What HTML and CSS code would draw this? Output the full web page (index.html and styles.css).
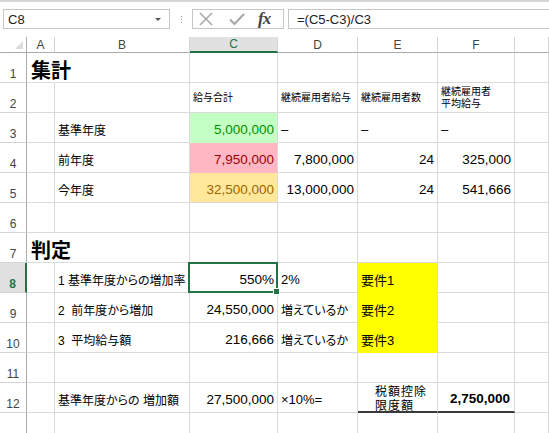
FILE: index.html
```html
<!DOCTYPE html>
<html lang="ja">
<head>
<meta charset="utf-8">
<link rel="stylesheet" href="styles.css">
</head>
<body>
<div class="fbar">
  <div class="namebox"><span>C8</span><span class="dd"></span></div>
  <div class="dots"><i></i><i></i><i></i></div>
  <div class="btns">
    <svg width="16" height="16" viewBox="0 0 16 16"><path d="M2 2L14 14M14 2L2 14" stroke="#a9a9a9" stroke-width="1.6" fill="none"/></svg>
    <svg width="18" height="16" viewBox="0 0 18 16"><path d="M2 8.5L6.5 13L16 3" stroke="#a9a9a9" stroke-width="2.2" fill="none"/></svg>
    <span class="fx">fx</span>
  </div>
  <div class="formula">=(C5-C3)/C3</div>
</div>
<div class="sheet">
  <div class="c corner"><span class="tri"></span></div>
  <div class="c ch">A</div><div class="c ch">B</div><div class="c ch sel">C</div><div class="c ch">D</div><div class="c ch">E</div><div class="c ch">F</div><div class="c ch"></div>

  <div class="c rh">1</div><div class="c title nob">集計</div><div class="c"></div><div class="c"></div><div class="c"></div><div class="c"></div><div class="c"></div><div class="c"></div>

  <div class="c rh">2</div><div class="c"></div><div class="c"></div><div class="c sm">給与合計</div><div class="c sm">継続雇用者給与</div><div class="c sm">継続雇用者数</div><div class="c sm">継続雇用者<br>平均給与</div><div class="c"></div>

  <div class="c rh">3</div><div class="c"></div><div class="c jp">基準年度</div><div class="c num good">5,000,000</div><div class="c">–</div><div class="c">–</div><div class="c">–</div><div class="c"></div>

  <div class="c rh">4</div><div class="c"></div><div class="c jp">前年度</div><div class="c num bad">7,950,000</div><div class="c num">7,800,000</div><div class="c num">24</div><div class="c num">325,000</div><div class="c"></div>

  <div class="c rh">5</div><div class="c"></div><div class="c jp">今年度</div><div class="c num neutral">32,500,000</div><div class="c num">13,000,000</div><div class="c num">24</div><div class="c num">541,666</div><div class="c"></div>

  <div class="c rh">6</div><div class="c"></div><div class="c"></div><div class="c"></div><div class="c"></div><div class="c"></div><div class="c"></div><div class="c"></div>

  <div class="c rh">7</div><div class="c title nob">判定</div><div class="c"></div><div class="c"></div><div class="c"></div><div class="c"></div><div class="c"></div><div class="c"></div>

  <div class="c rh rsel">8</div><div class="c"></div><div class="c jp">1&nbsp;基準年度からの増加率</div><div class="c num active">550%<span class="handle"></span></div><div class="c">2%</div><div class="c jp yel">要件1</div><div class="c"></div><div class="c"></div>

  <div class="c rh">9</div><div class="c"></div><div class="c jp">2&nbsp;&nbsp;前年度から増加</div><div class="c num">24,550,000</div><div class="c jp">増えているか</div><div class="c jp yel">要件2</div><div class="c"></div><div class="c"></div>

  <div class="c rh">10</div><div class="c"></div><div class="c jp">3&nbsp;&nbsp;平均給与額</div><div class="c num">216,666</div><div class="c jp">増えているか</div><div class="c jp yel">要件3</div><div class="c"></div><div class="c"></div>

  <div class="c rh">11</div><div class="c"></div><div class="c"></div><div class="c"></div><div class="c"></div><div class="c"></div><div class="c"></div><div class="c"></div>

  <div class="c rh">12</div><div class="c"></div><div class="c jp">基準年度からの 増加額</div><div class="c num">27,500,000</div><div class="c mult">×10%=</div><div class="c jp wrap total">税額控除<br>限度額</div><div class="c num bold total">2,750,000</div><div class="c"></div>

  <div class="c rh"></div><div class="c"></div><div class="c"></div><div class="c"></div><div class="c"></div><div class="c"></div><div class="c"></div><div class="c"></div>
</div>
</body>
</html>
```
FILE: styles.css
```css
html, body {
  margin: 0;
  padding: 0;
  background: #fff;
  overflow: hidden;
}
body {
  font-family: "Liberation Sans", "Noto Sans CJK JP", sans-serif;
  color: #000;
  width: 549px;
  height: 433px;
}
.fbar {
  height: 37px;
  box-sizing: border-box;
  border-top: 2px solid #d6d6d6;
  display: flex;
  align-items: flex-start;
  padding-top: 7px;
}
.namebox {
  margin-left: 3px;
  width: 167px;
  height: 20px;
  box-sizing: border-box;
  border: 1px solid #c6c6c6;
  display: flex;
  align-items: center;
  justify-content: space-between;
  padding: 0 8px 0 4px;
  font-size: 13px;
  color: #222;
}
.dd {
  width: 0;
  height: 0;
  border-left: 3px solid transparent;
  border-right: 3px solid transparent;
  border-top: 3px solid #555;
}
.dots {
  width: 22px;
  height: 20px;
  display: flex;
  flex-direction: column;
  align-items: center;
  justify-content: center;
  gap: 2px;
}
.dots i {
  width: 1px;
  height: 1px;
  background: #9a9a9a;
  display: block;
}
.btns {
  width: 92px;
  height: 20px;
  box-sizing: border-box;
  border: 1px solid #c6c6c6;
  display: flex;
  align-items: center;
  gap: 14px;
  padding-left: 5px;
}
.fx {
  font-family: "Liberation Serif", serif;
  font-style: italic;
  font-weight: bold;
  font-size: 17px;
  color: #444;
  margin-left: -2px;
  letter-spacing: -1px;
}
.formula {
  margin-left: 4px;
  flex: 1;
  height: 20px;
  box-sizing: border-box;
  border: 1px solid #c6c6c6;
  border-right: none;
  font-size: 13px;
  color: #222;
  padding-left: 8px;
  display: flex;
  align-items: center;
}
.sheet {
  display: grid;
  grid-template-columns: 27px 28px 135px 88px 80px 80px 77px 1fr;
  grid-template-rows: 16px repeat(13, 30px);
}
.c {
  box-sizing: border-box;
  border-right: 1px solid #dadada;
  border-bottom: 1px solid #dadada;
  display: flex;
  align-items: center;
  padding: 3px 3px 0 3px;
  font-size: 13px;
  white-space: nowrap;
  position: relative;
  min-width: 0;
}
.corner {
  border-right: 1px solid #ababab;
  border-bottom: 1px solid #ababab;
  padding: 0;
}
.tri {
  position: absolute;
  right: 3px;
  bottom: 3px;
  width: 0;
  height: 0;
  border-left: 8px solid transparent;
  border-bottom: 8px solid #dcdcdc;
}
.ch {
  justify-content: center;
  padding: 0;
  font-size: 12px;
  color: #444;
  border-bottom: 1px solid #ababab;
  border-right: 1px solid #d4d4d4;
}
.ch.sel {
  background: #e1e1e1;
  color: #217346;
  border-bottom: 2px solid #217346;
}
.rh {
  justify-content: center;
  align-items: flex-end;
  padding: 0 0 1px 0;
  font-size: 12px;
  color: #444;
  border-right: 1px solid #ababab;
  border-bottom: 1px solid #d4d4d4;
}
.rh.rsel {
  background: #e1e1e1;
  color: #217346;
  border-right: 2px solid #217346;
  font-weight: bold;
}
.title {
  font-size: 20px;
  font-weight: bold;
  padding: 3px 0 0 4px;
  overflow: visible;
  z-index: 1;
}
.nob {
  border-right-color: transparent;
}
.sm {
  font-size: 10px;
  line-height: 12px;
  padding-top: 1px;
}
.jp {
  font-size: 12px;
  font-feature-settings: "palt";
}
.num {
  justify-content: flex-end;
  font-size: 13.5px;
}
.mult {
  font-size: 13px;
}
.good {
  background: #c4ffc4;
  color: #009000;
  border-bottom-color: #c4ffc4;
}
.bad {
  background: #ffb7c3;
  color: #9c0006;
  border-bottom-color: #ffb7c3;
}
.neutral {
  background: #ffe89b;
  color: #9c6500;
}
.yel {
  background: #ffff00;
  border-bottom-color: #ffff00;
  font-size: 13px;
}
.active::after {
  content: "";
  position: absolute;
  left: -2px;
  top: -1px;
  right: -1px;
  bottom: -1px;
  border: 2px solid #217346;
}
.handle {
  position: absolute;
  right: -3px;
  bottom: -3px;
  width: 5px;
  height: 5px;
  background: #217346;
  border: 1px solid #fff;
  z-index: 2;
}
.wrap {
  line-height: 14px;
  padding-left: 17px;
  white-space: normal;
  align-items: center;
  letter-spacing: 1px;
}
.bold {
  font-weight: bold;
  padding-right: 4px;
}
.total {
  border-bottom: 2px solid #3a3a3a;
}
```
